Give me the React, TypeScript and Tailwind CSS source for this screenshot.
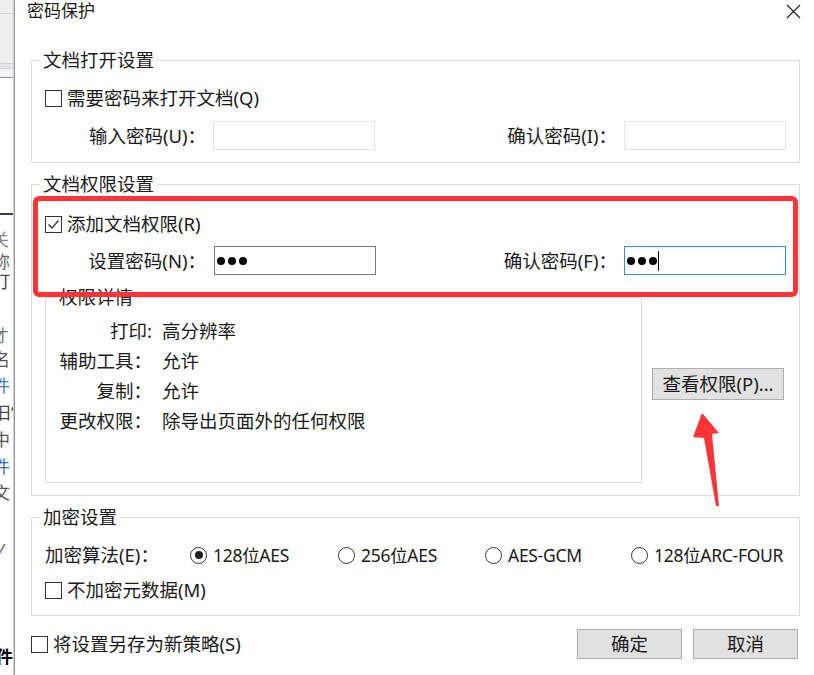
import React from 'react';

const permissions = [
  ['打印:', '高分辨率'],
  ['辅助工具：', '允许'],
  ['复制：', '允许'],
  ['更改权限：', '除导出页面外的任何权限'],
];

const algorithms = [
  { label: '128位AES', checked: true, width: 'w-[148px]' },
  { label: '256位AES', checked: false, width: 'w-[147px]' },
  { label: 'AES-GCM', checked: false, width: 'w-[146px]' },
  { label: '128位ARC-FOUR', checked: false, width: '' },
];

function CheckBox({ checked = false }: { checked?: boolean }) {
  return (
    <span className="flex h-[17px] w-[17px] shrink-0 items-center justify-center border-[1.5px] border-[#333] bg-white">
      {checked && (
        <svg width="13" height="13" viewBox="0 0 13 13" fill="none">
          <path d="M1.5 6.5 L5 10 L11.5 2.5" stroke="#333" strokeWidth="1.4" />
        </svg>
      )}
    </span>
  );
}

function Radio({ checked = false }: { checked?: boolean }) {
  return (
    <span className="flex h-[17px] w-[17px] shrink-0 items-center justify-center rounded-full border-[1.5px] border-[#333] bg-white">
      {checked && <span className="h-[8px] w-[8px] rounded-full bg-[#222]" />}
    </span>
  );
}

function Dots() {
  return (
    <div className="flex gap-[3px]">
      <span className="h-[8px] w-[8px] rounded-full bg-black" />
      <span className="h-[8px] w-[8px] rounded-full bg-black" />
      <span className="h-[8px] w-[8px] rounded-full bg-black" />
    </div>
  );
}

function LeftStrip() {
  return (
    <div className="flex w-[13px] shrink-0 flex-col overflow-hidden bg-white text-[17px] leading-[20px]">
      <div className="h-[13px] bg-[#eeeef0]" />
      <div className="h-[1px] bg-[#cfcfd4]" />
      <div className="h-[49px] bg-[#eeeef0]" />
      <div className="h-[1px] bg-[#cfcfd4]" />
      <div className="h-[4px] bg-[#e4e4e8]" />
      <div className="h-[1px] bg-[#cfcfd4]" />
      <div className="h-[8px] bg-[#f4f4f6]" />
      <div className="h-[1px] bg-[#8d8d99]" />
      <div className="h-[135px]" />
      <div className="h-[2px] bg-[#3b3b58]" />
      <div className="mt-[15px] h-[20px] -ml-[8px] text-[#888]">关</div>
      <div className="mt-[2px] h-[20px] -ml-[7px] text-[#666]">称</div>
      <div className="h-[20px] -ml-[7px] text-[#444]">打</div>
      <div className="mt-[34px] h-[20px] -ml-[8px] text-[#777]">才</div>
      <div className="mt-[4px] h-[20px] -ml-[7px] text-[#555]">名</div>
      <div className="mt-[6px] h-[20px] -ml-[7px] text-[#3a7bbf]">件</div>
      <div className="mt-[7px] h-[20px] -ml-[6px] text-[#444]">旧”</div>
      <div className="mt-[7px] h-[20px] -ml-[7px] text-[#555]">中</div>
      <div className="mt-[7px] h-[20px] -ml-[7px] text-[#2f6fb0]">件</div>
      <div className="mt-[6px] h-[20px] -ml-[7px] text-[#555]">文</div>
      <div className="mt-[37px] h-[20px] -ml-[2px] italic text-[#666]">/</div>
      <div className="mt-[87px] h-[20px] -ml-[4px] font-bold text-black">件</div>
    </div>
  );
}

export default function App() {
  return (
    <div
      lang="zh-CN"
      className="relative flex h-[675px] w-[814px] overflow-hidden bg-white font-['Noto_Sans','Noto_Sans_CJK_SC',sans-serif] text-[18.5px] leading-[24px] text-[#1a1a1a]"
    >
      <LeftStrip />
      <div className="w-[1px] shrink-0 bg-[#d0d0d0]" />
      <div className="w-[1px] shrink-0 bg-[#9a9a9a]" />

      <div className="flex min-w-0 flex-1 flex-col">
        {/* title bar */}
        <div className="flex h-[22px] items-center justify-between pl-[12px] pr-[13px]">
          <span className="text-[17px]">密码保护</span>
          <svg width="15" height="15" viewBox="0 0 15 15">
            <path d="M1 1 L14 14 M14 1 L1 14" stroke="#222" strokeWidth="1.2" />
          </svg>
        </div>

        {/* open settings */}
        <fieldset className="mt-[26px] ml-[16px] mr-[14px] h-[115px] min-w-0 border border-[#dcdcdc] px-[13px]">
          <legend className="-ml-[5px] px-[3px] leading-[24px]">文档打开设置</legend>
          <div className="mt-[14px] flex h-[24px] items-center gap-[5px]">
            <CheckBox />
            <span>需要密码来打开文档(Q)</span>
          </div>
          <div className="mt-[11px] flex h-[29px] items-center">
            <span className="w-[161px] text-right">输入密码(U)：</span>
            <div className="ml-[7px] h-[29px] w-[162px] border border-[#e3e3e3]" />
            <span className="flex-1 text-right">确认密码(I)：</span>
            <div className="ml-[7px] h-[29px] w-[162px] border border-[#e3e3e3]" />
          </div>
        </fieldset>

        {/* permission settings */}
        <fieldset className="mt-[9px] ml-[16px] mr-[14px] h-[324px] min-w-0 border border-[#dcdcdc] px-[13px]">
          <legend className="-ml-[5px] px-[3px] leading-[24px]">文档权限设置</legend>
          <div className="mt-[16px] flex h-[24px] items-center gap-[5px]">
            <CheckBox checked />
            <span>添加文档权限(R)</span>
          </div>
          <div className="mt-[10px] flex h-[29px] items-center">
            <span className="w-[161px] text-right">设置密码(N)：</span>
            <div className="ml-[8px] flex h-[29px] w-[162px] items-center border border-[#7a7a7a] pl-[2px]">
              <Dots />
            </div>
            <span className="flex-1 text-right">确认密码(F)：</span>
            <div className="ml-[7px] flex h-[29px] w-[162px] items-center border border-[#3d8ee0] pl-[2px]">
              <Dots />
              <span className="ml-[1px] h-[20px] w-[1px] bg-black" />
            </div>
          </div>

          <div className="mt-[10px] flex items-start">
            <fieldset className="h-[198px] w-[597px] min-w-0 border border-[#dcdcdc] pl-[13px]">
              <legend className="-ml-[3px] px-[3px] leading-[24px]">权限详情</legend>
              <div className="mt-[7px] flex flex-col">
                {permissions.map(([label, value]) => (
                  <div key={label} className="flex h-[30px] items-center">
                    <span className="w-[93px] text-right">{label}</span>
                    <span className="ml-[10px]">{value}</span>
                  </div>
                ))}
              </div>
            </fieldset>
            <button className="mt-[83px] ml-[10px] h-[32px] w-[132px] border border-[#adadad] bg-[#e1e1e1]">
              查看权限(P)...
            </button>
          </div>
        </fieldset>

        {/* encryption */}
        <fieldset className="mt-[9px] ml-[16px] mr-[14px] h-[111px] min-w-0 border border-[#dcdcdc] px-[13px]">
          <legend className="-ml-[5px] px-[3px] leading-[24px]">加密设置</legend>
          <div className="mt-[14px] flex h-[24px] items-center whitespace-nowrap">
            <span className="w-[145px] shrink-0">加密算法(E)：</span>
            {algorithms.map((a) => (
              <div key={a.label} className={`flex shrink-0 items-center gap-[6px] ${a.width}`}>
                <Radio checked={a.checked} />
                <span className="text-[17.5px] tracking-[-0.3px]">{a.label}</span>
              </div>
            ))}
          </div>
          <div className="mt-[11px] flex h-[24px] items-center gap-[5px]">
            <CheckBox />
            <span>不加密元数据(M)</span>
          </div>
        </fieldset>

        {/* footer */}
        <div className="mt-[13px] ml-[16px] mr-[16px] flex h-[30px] items-center">
          <CheckBox />
          <span className="ml-[5px]">将设置另存为新策略(S)</span>
          <div className="ml-auto flex gap-[11px]">
            <button className="h-[30px] w-[105px] border border-[#adadad] bg-[#e1e1e1]">确定</button>
            <button className="h-[30px] w-[105px] border border-[#adadad] bg-[#e1e1e1]">取消</button>
          </div>
        </div>
      </div>

      {/* annotation overlay */}
      <div className="pointer-events-none absolute left-[33px] top-[196px] h-[101px] w-[765px] rounded-[6px] border-[5px] border-[#fe3437]" />
      <svg className="pointer-events-none absolute left-[688px] top-[408px]" width="36" height="104" viewBox="0 0 36 104">
        <polygon points="14,5 31,25 24,26 31,98 28,98 16,30 5,29" fill="#fe3437" />
      </svg>
    </div>
  );
}
